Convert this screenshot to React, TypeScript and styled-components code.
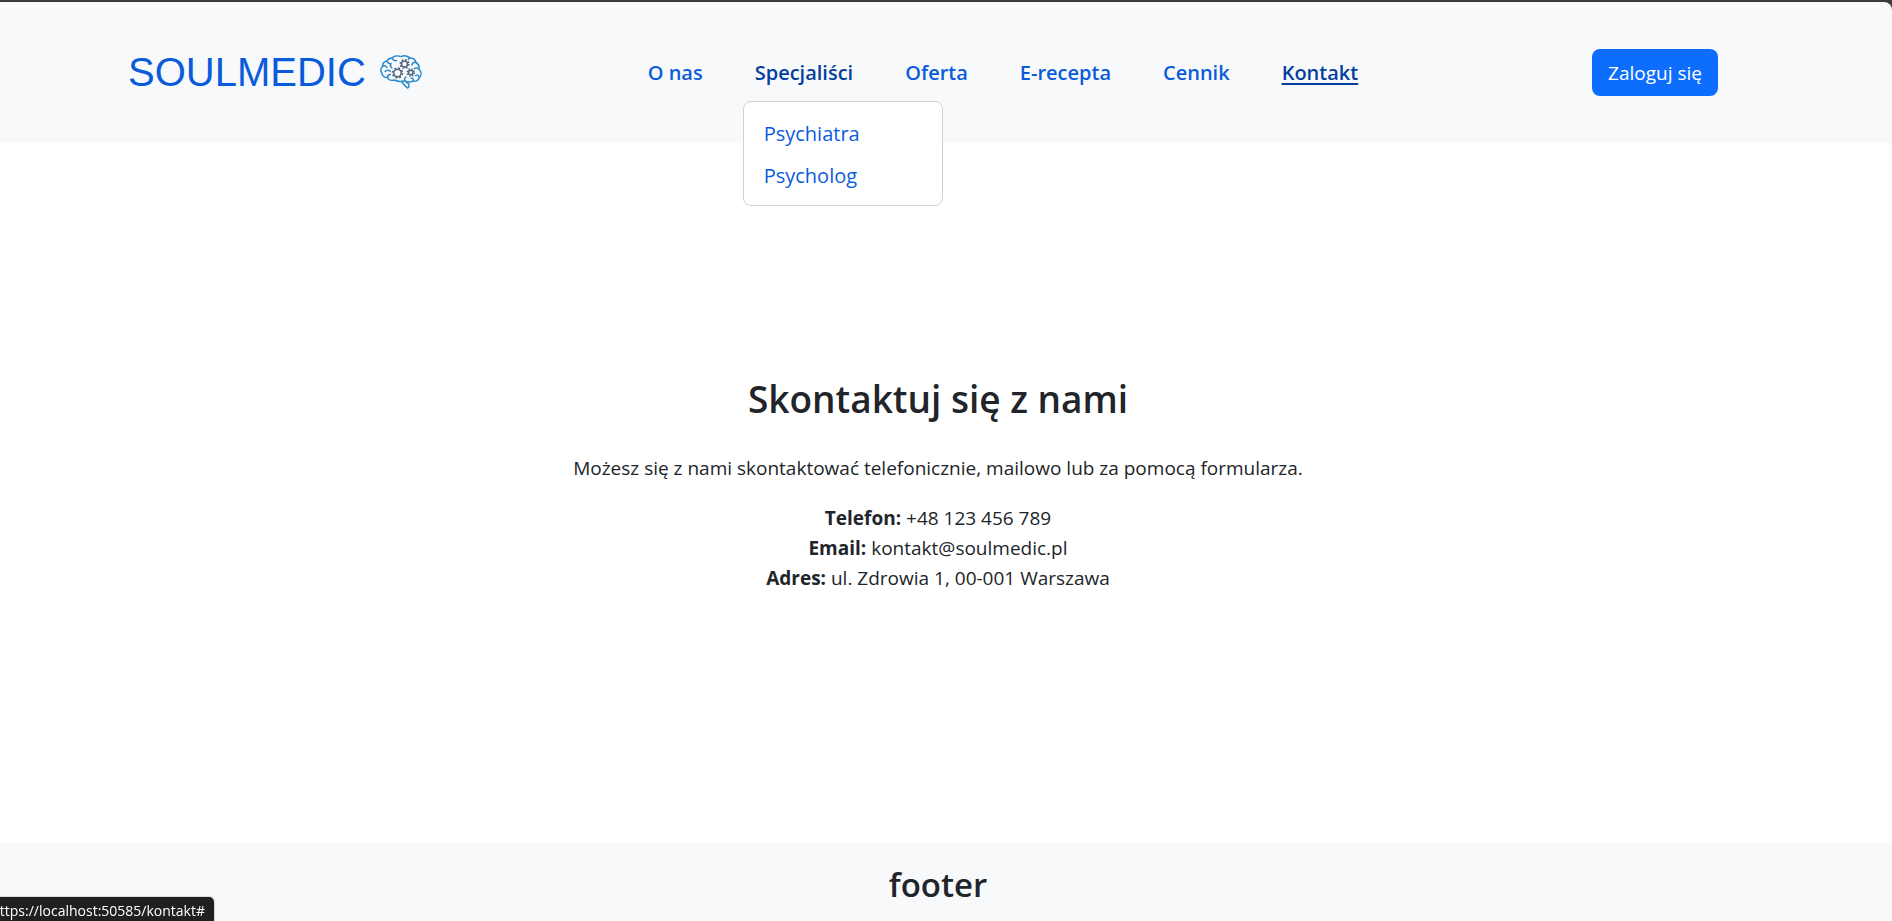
import React from "react";
import styled, { createGlobalStyle } from "styled-components";

const GlobalStyle = createGlobalStyle`
  *, *::before, *::after { box-sizing: border-box; }
  body {
    margin: 0;
    background: #3b3b3b;
    color: #212529;
    font-family: "Segoe UI", "Open Sans", "Noto Sans", sans-serif;
    font-size: 19px;
    line-height: 30px;
  }
`;

const Page = styled.div`
  min-height: 100vh;
  padding-top: 2px;
  display: flex;
  flex-direction: column;
`;

const Header = styled.header`
  height: 141px;
  padding: 0 174px 0 128px;
  display: flex;
  align-items: center;
  justify-content: space-between;
  background: #f8f9fb;
  border-top-right-radius: 8px;
`;

const Brand = styled.a`
  display: flex;
  align-items: center;
  gap: 14px;
  color: #0b5cdb;
  font-family: "Liberation Sans", Arial, sans-serif;
  font-size: 40px;
  line-height: 46px;
  padding-bottom: 2px;
  text-decoration: none;
`;

const Nav = styled.nav`
  padding-right: 8px;
`;

const NavList = styled.ul`
  display: flex;
  gap: 52px;
  margin: 0;
  padding: 0;
  list-style: none;
`;

const NavItem = styled.li`
  position: relative;
`;

const NavLink = styled.a<{ $active?: boolean; $underlined?: boolean }>`
  color: ${(p) => (p.$active ? "#043f9e" : "#0b5cdb")};
  font-size: 20px;
  font-weight: 600;
  text-decoration: ${(p) => (p.$underlined ? "underline" : "none")};
  text-decoration-thickness: 2px;
  text-underline-offset: 3px;
`;

const Menu = styled.ul`
  position: absolute;
  top: 43px;
  left: -12px;
  width: 200px;
  margin: 0;
  padding: 11px 20px 8px;
  list-style: none;
  background: #fff;
  border: 1px solid #cfd1d3;
  border-radius: 8px;
`;

const MenuLink = styled.a`
  display: block;
  color: #0b5cdb;
  font-size: 20px;
  line-height: 42px;
  text-decoration: none;
`;

const LoginButton = styled.button`
  height: 47px;
  padding: 0 16px;
  border: 0;
  border-radius: 8px;
  background: #0d6efd;
  color: #fff;
  font: inherit;
`;

const Main = styled.main`
  flex: 1;
  padding: 2px 16px 0 0;
  display: flex;
  flex-direction: column;
  align-items: center;
  justify-content: center;
  background: #fff;
  text-align: center;
`;

const Title = styled.h1`
  margin: 0 0 30px;
  font-size: 37px;
  font-weight: 600;
  line-height: 48px;
`;

const Text = styled.p`
  margin: 0 0 20px;
`;

const Footer = styled.footer`
  height: 78px;
  padding: 21px 16px 0 0;
  background: #f8f9fb;
  text-align: center;
`;

const FooterTitle = styled.h2`
  margin: 0;
  font-size: 33px;
  font-weight: 600;
  line-height: 42px;
`;

const StatusBar = styled.div`
  position: fixed;
  left: 0;
  bottom: 0;
  width: 214px;
  height: 24px;
  padding-right: 9px;
  display: flex;
  justify-content: flex-end;
  overflow: hidden;
  background: #202020;
  border-top-right-radius: 5px;
  box-shadow: 0 0 1px 1px #d3dadd;
  color: #fff;
  font-size: 14px;
  line-height: 28px;
  white-space: nowrap;
`;

const Gear = ({ x, y, r }: { x: number; y: number; r: number }) => (
  <g stroke="#52657f" fill="none">
    <circle cx={x} cy={y} r={r} strokeWidth="1.5" />
    <circle cx={x} cy={y} r={r + 1.3} strokeWidth="1.5" strokeLinecap="butt" strokeDasharray={`${((r + 1.3) * Math.PI) / 8} ${((r + 1.3) * Math.PI) / 8}`} />
  </g>
);

const BrainLogo = () => (
  <svg width="42" height="34" viewBox="0 0 42 34" fill="none" stroke="#2c8bcb" strokeWidth="1.5" strokeLinecap="round" strokeLinejoin="round" aria-hidden="true">
    <path d="M12 3C14 .8 18 .4 21 1.6C24 .2 28 .8 30 3C33 3 35.500 5 36 7.500C38.500 9 39.500 11.500 39 14C41.500 16.500 41.700 20 39.500 22.500C38.500 25 36 26.500 33 26.300C30 27.500 27 27 25 25.800C21 27 17 26.600 14.500 25C11.500 26 8.500 25 7.500 22.500C4.500 22.800 2 21 2 18.200C.3 16 .5 13 2.500 11.500C2.500 8.500 4.500 6.500 7 6C8 4 10 3 12 3Z" />
    <path d="M21.500 26.500C23 28.500 25 31 27.500 33C29 32.500 29.500 30.500 28.500 28.500L26 27" />
    <path d="M12 3C12.500 5 14.500 6 16.500 5.500M7 6C7.500 8 9 9 11 8.500C10 10.500 10.500 12 12 13M2.500 11.500C4 10.500 6 11 7 12.500M5 16.500C7 14.500 9.500 15 10.500 16.500M7.500 22.500C7.500 20.500 8.500 19.500 10.500 19.500M30 3C28.500 3.500 28 4 28.500 5.500M36 7.500C34 7 32.500 8 32 10M39 14C37 12.500 35 12.500 34 14M39.500 22.500C38.500 20 37 19.500 35.500 20.500M33 26.300C34 24.500 33 23 31 23M25 25.800C24 24.500 24.500 23 26 22" />
    <g fill="#f8f9fb" stroke="none">
      <circle cx="24.500" cy="9.500" r="6" />
      <circle cx="17.500" cy="18" r="6.500" />
      <circle cx="30.500" cy="17.500" r="5" />
    </g>
    <Gear x={24.5} y={9} r={3} />
    <Gear x={17.5} y={18} r={3.7} />
    <Gear x={30.8} y={17.5} r={2.3} />
  </svg>
);

const specialists = ["Psychiatra", "Psycholog"];

export default function App() {
  return (
    <>
      <GlobalStyle />
      <Page>
        <Header>
          <Brand href="#">
            SOULMEDIC
            <BrainLogo />
          </Brand>
          <Nav>
            <NavList>
              <NavItem><NavLink href="#">O nas</NavLink></NavItem>
              <NavItem>
                <NavLink href="#" $active>Specjaliści</NavLink>
                <Menu>
                  {specialists.map((name) => (
                    <li key={name}><MenuLink href="#">{name}</MenuLink></li>
                  ))}
                </Menu>
              </NavItem>
              <NavItem><NavLink href="#">Oferta</NavLink></NavItem>
              <NavItem><NavLink href="#">E-recepta</NavLink></NavItem>
              <NavItem><NavLink href="#">Cennik</NavLink></NavItem>
              <NavItem><NavLink href="#" $active $underlined>Kontakt</NavLink></NavItem>
            </NavList>
          </Nav>
          <LoginButton type="button">Zaloguj się</LoginButton>
        </Header>
        <Main>
          <Title>Skontaktuj się z nami</Title>
          <Text>Możesz się z nami skontaktować telefonicznie, mailowo lub za pomocą formularza.</Text>
          <Text>
            <strong>Telefon:</strong> +48 123 456 789<br />
            <strong>Email:</strong> kontakt@soulmedic.pl<br />
            <strong>Adres:</strong> ul. Zdrowia 1, 00-001 Warszawa
          </Text>
        </Main>
        <Footer>
          <FooterTitle>footer</FooterTitle>
        </Footer>
      </Page>
      <StatusBar>https://localhost:50585/kontakt#</StatusBar>
    </>
  );
}
